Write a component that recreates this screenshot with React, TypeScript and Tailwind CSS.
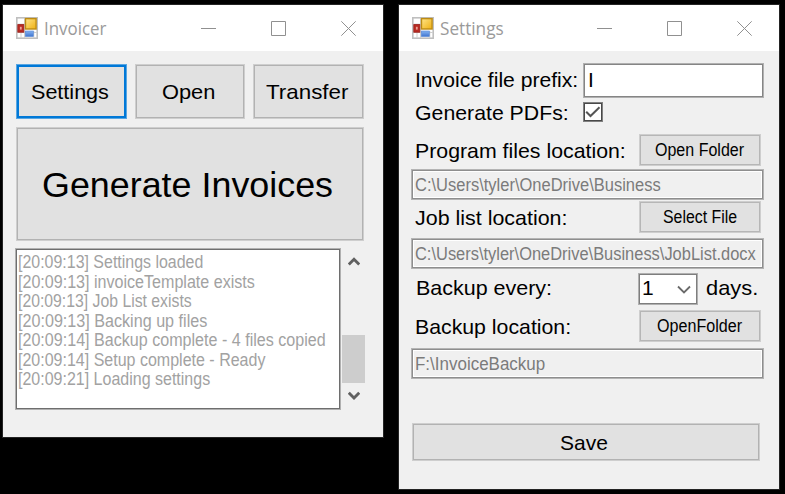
import { useLayoutEffect, useRef, useState } from "react";
import type { ReactNode } from "react";
import { clsx } from "clsx";

/* Single-line text whose glyphs are condensed or widened to an exact width. */
function Fit({ text, width, className }: { text: string; width: number; className?: string }) {
  const ref = useRef<HTMLSpanElement>(null);
  const [scale, setScale] = useState(1);
  useLayoutEffect(() => {
    if (ref.current) setScale(width / ref.current.offsetWidth);
  }, [text, width]);
  return (
    <span className={clsx("block shrink-0 text-left whitespace-pre", className)} style={{ width }}>
      <span ref={ref} className="inline-block origin-left" style={{ transform: `scaleX(${scale})` }}>
        {text}
      </span>
    </span>
  );
}

function FormIcon() {
  return (
    <svg width="22" height="22" viewBox="0 0 22 22" className="shrink-0">
      <defs>
        <linearGradient id="gold" x1="0" y1="0" x2="1" y2="1">
          <stop offset="0" stopColor="#ffe58a" />
          <stop offset="1" stopColor="#efb010" />
        </linearGradient>
        <linearGradient id="blue" x1="0" y1="0" x2="0" y2="1">
          <stop offset="0" stopColor="#86b4f2" />
          <stop offset="1" stopColor="#3f74d0" />
        </linearGradient>
      </defs>
      <rect x="0.8" y="0.8" width="20.4" height="20.4" fill="#fff" stroke="#bfbfbf" strokeWidth="1.6" />
      <path d="M8.5 1v20M1 7.2h8M1 15.5h20M5 16v5M17.8 14v7" stroke="#cfcfcf" />
      <rect x="1.8" y="7.6" width="6" height="7.6" fill="#b92b22" stroke="#9b1d18" strokeWidth="0.8" />
      <rect x="3.9" y="9.8" width="1.8" height="2.8" fill="#eda096" />
      <rect x="9.5" y="1.6" width="10.6" height="10.4" fill="url(#gold)" stroke="#bd8b13" strokeWidth="1.4" />
      <rect x="9.3" y="14" width="8" height="5.5" fill="url(#blue)" stroke="#5384d4" strokeWidth="0.6" />
    </svg>
  );
}

function TitleBar({ title, width }: { title: string; width: number }) {
  return (
    <div className="flex h-[46px] shrink-0 items-center bg-white pl-[13px] pr-[27px] text-[#909090]">
      <FormIcon />
      <Fit
        text={title}
        width={width}
        className="-mt-px ml-[6px] font-['Open_Sans',sans-serif] text-[18.5px] leading-[24px] font-normal text-[#9a9a9a]"
      />
      <div className="ml-auto flex gap-[55px]">
        {["M0 7.5h15", "M.5 .5h14v14H.5z", "M.3 .3l14.4 14.4M14.7 .3L.3 14.7"].map((d) => (
          <svg key={d} width="15" height="15" viewBox="0 0 15 15" fill="none" stroke="currentColor">
            <path d={d} />
          </svg>
        ))}
      </div>
    </div>
  );
}

function Window({ title, titleWidth, className, children }: {
  title: string;
  titleWidth: number;
  className: string;
  children: ReactNode;
}) {
  return (
    <section className={clsx("flex shrink-0 flex-col border border-[#242424] bg-[#f0f0f0]", className)}>
      <TitleBar title={title} width={titleWidth} />
      {children}
    </section>
  );
}

function Button({ text, width, className }: { text: string; width: number; className: string }) {
  return (
    <button className={clsx("flex shrink-0 items-center justify-center bg-[#e1e1e1]", className)}>
      <Fit text={text} width={width} />
    </button>
  );
}

function PathBox({ text, width, className }: { text: string; width: number; className?: string }) {
  return (
    <div
      className={clsx(
        "flex h-[31px] w-[353px] shrink-0 items-center border border-[#b4b4b4] pl-[3px] pt-px text-[17.5px] text-[#7b7b7b] shadow-[inset_0_0_0_1px_#8e8e8e,inset_0_0_0_2px_#fff]",
        className,
      )}
    >
      <Fit text={text} width={width} />
    </div>
  );
}

const log: [string, number][] = [
  ["[20:09:13] Settings loaded", 185],
  ["[20:09:13] invoiceTemplate exists", 237],
  ["[20:09:13] Job List exists", 174],
  ["[20:09:13] Backing up files", 189],
  ["[20:09:14] Backup complete - 4 files copied", 308],
  ["[20:09:14] Setup complete - Ready", 247],
  ["[20:09:21] Loading settings", 192],
];

const plain = "border border-[#cecece] shadow-[inset_0_0_0_1px_#b2b2b2]";
const small = "h-[32px] w-[122px] text-[18px] border border-[#cecece] shadow-[inset_0_0_0_1px_#b6b6b6] pt-px pr-px";

export default function App() {
  return (
    <main className="flex h-[494px] w-[785px] items-start overflow-hidden bg-black pl-[2px] pt-[4px] font-['Liberation_Sans',Arial,sans-serif] text-black">
      <Window title="Invoicer" titleWidth={62} className="h-[434px] w-[382px]">
        <div className="ml-[13px] mt-[13px] flex gap-[8px] text-[21px]">
          <Button text="Settings" width={78} className="h-[55px] w-[111px] border border-[#58a6e2] pr-[3px] pt-px shadow-[inset_0_0_0_2px_#0078d7]" />
          <Button text="Open" width={53} className={clsx("h-[55px] w-[110px] pr-[3px] pt-px", plain)} />
          <Button text="Transfer" width={82} className={clsx("h-[55px] w-[111px] pr-[3px] pt-px", plain)} />
        </div>
        <Button text="Generate Invoices" width={291} className={clsx("ml-[13px] mt-[8px] h-[114px] w-[348px] pr-[5px] pt-[2px] text-[35px]", plain)} />
        <div className="ml-[12px] mt-[7px] flex">
          <div className="h-[162px] w-[326px] border border-[#b0b0b0] bg-white pl-[2px] pt-[4px] text-[17.5px] leading-[19.55px] text-[#a2a2a2] shadow-[inset_0_0_0_1px_#6e6e6e]">
            {log.map(([text, width]) => (
              <Fit key={text} text={text} width={width} />
            ))}
          </div>
          <div className="ml-px flex h-[160px] w-[23px] flex-col items-center text-[#606060]">
            <svg width="12" height="10" viewBox="0 0 12 10" className="mt-[8px]" fill="none" stroke="currentColor" strokeWidth="2.8">
              <path d="M.8 8.5L6 3.2l5.2 5.3" />
            </svg>
            <div className="mt-[69px] h-[48px] w-[23px] bg-[#cdcdcd]" />
            <svg width="12" height="10" viewBox="0 0 12 10" className="mt-[8px]" fill="none" stroke="currentColor" strokeWidth="2.8">
              <path d="M.8 1.8L6 7.1l5.2-5.3" />
            </svg>
          </div>
        </div>
      </Window>

      <Window title="Settings" titleWidth={64} className="ml-[14px] h-[486px] w-[382px]">
        <div className="flex flex-col pl-[12px] text-[21px]">
          <div className="mt-[12px] flex h-[35px] items-center">
            <Fit text="Invoice file prefix:" width={163} className="-mt-[2px] ml-[4px]" />
            <div className="ml-[5px] flex h-[35px] w-[181px] items-center border border-[#b0b0b0] bg-white pb-[2px] pl-[4px] shadow-[inset_0_0_0_1px_#858585]">I</div>
          </div>
          <div className="mt-[4px] flex h-[20px] items-center">
            <Fit text="Generate PDFs:" width={154} className="ml-[4px] mt-[2px]" />
            <div className="ml-[14px] flex h-[20px] w-[20px] items-center justify-center border border-[#808080] bg-white shadow-[inset_0_0_0_1px_#484848]">
              <svg width="16" height="16" viewBox="0 0 16 16" fill="none" stroke="#555" strokeWidth="2">
                <path d="M1.2 7.8l4.3 4.2L14.5 3.3" />
              </svg>
            </div>
          </div>
          <div className="mt-[12px] flex h-[32px] items-center">
            <Fit text="Program files location:" width={211} className="ml-[4px] mt-px" />
            <Button text="Open Folder" width={89} className={clsx("ml-[13px]", small)} />
          </div>
          <PathBox text="C:\Users\tyler\OneDrive\Business" width={246} className="mt-[3px]" />
          <div className="mt-px flex h-[32px] items-center">
            <Fit text="Job list location:" width={152} className="ml-[4px] mt-[2px]" />
            <Button text="Select File" width={74} className={clsx("ml-[72px]", small)} />
          </div>
          <PathBox text="C:\Users\tyler\OneDrive\Business\JobList.docx" width={341} className="mt-[5px]" />
          <div className="mt-[4px] flex h-[32px] items-center">
            <Fit text="Backup every:" width={136} className="-mt-[3px] ml-[5px]" />
            <div className="ml-[86px] flex h-[32px] w-[60px] items-center border border-[#b0b0b0] bg-white pb-[3px] pl-[3px] shadow-[inset_0_0_0_1px_#7e7e7e]">
              1
              <svg width="14" height="9" viewBox="0 0 14 9" className="ml-auto mr-[6px] mt-[4px]" fill="none" stroke="#6a6a6a" strokeWidth="1.8">
                <path d="M1 1.5l6 6 6-6" />
              </svg>
            </div>
            <Fit text="days." width={52} className="-mt-[3px] ml-[8px]" />
          </div>
          <div className="mt-[5px] flex h-[32px] items-center">
            <Fit text="Backup location:" width={156} className="ml-[4px] mt-[2px]" />
            <Button text="OpenFolder" width={85} className={clsx("ml-[68px]", small)} />
          </div>
          <PathBox text="F:\InvoiceBackup" width={130} className="mt-[6px]" />
          <Button text="Save" width={48} className={clsx("ml-px mt-[44px] h-[38px] w-[348px] pr-[4px] pt-px", plain)} />
        </div>
      </Window>
    </main>
  );
}
